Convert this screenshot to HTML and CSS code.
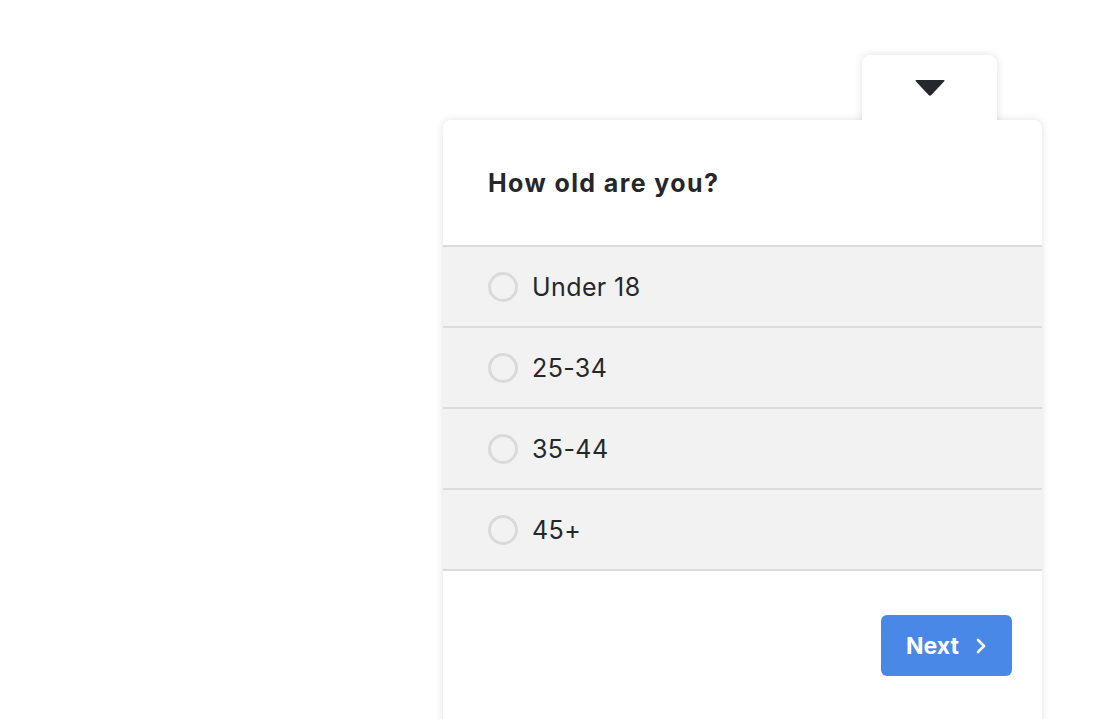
FILE: index.html
```html
<!DOCTYPE html>
<html lang="en">
<head>
    <meta charset="UTF-8">
    <meta name="viewport" content="width=device-width, initial-scale=1.0">
    <title>Survey</title>
    <link rel="stylesheet" href="styles.css">
</head>
<body>
    <div class="survey">
        <button class="toggle" aria-label="Collapse">
            <svg width="32" height="18" viewBox="0 0 32 18">
                <path d="M2.5 1 H29.5 Q31.5 1 30 2.6 L17.4 16 Q16 17.4 14.6 16 L2 2.6 Q0.5 1 2.5 1 Z" fill="#24272b"/>
            </svg>
        </button>
        <div class="card">
            <div class="question">How old are you?</div>
            <label class="option"><span class="radio"></span>Under 18</label>
            <label class="option"><span class="radio"></span>25-34</label>
            <label class="option"><span class="radio"></span>35-44</label>
            <label class="option"><span class="radio"></span>45+</label>
            <div class="footer">
                <button class="next">Next
                    <svg width="12" height="16" viewBox="0 0 12 16">
                        <path d="M3 2 L9 8 L3 14" fill="none" stroke="#fff" stroke-width="2.6" stroke-linecap="round" stroke-linejoin="round"/>
                    </svg>
                </button>
            </div>
        </div>
    </div>
</body>
</html>
```

FILE: styles.css
```css
body {
    margin: 0;
    font-family: Inter, "Liberation Sans", sans-serif;
    background-color: #fff;
    color: #25272b;
    overflow: hidden;
}
.survey {
    display: flex;
    flex-direction: column;
    width: 599px;
    padding-top: 55px;
    margin-left: 443px;
}
.toggle {
    position: relative;
    z-index: 1;
    align-self: flex-end;
    margin-right: 45px;
    margin-bottom: -8px;
    width: 135px;
    height: 73px;
    padding: 0 0 8px;
    display: flex;
    align-items: center;
    justify-content: center;
    background-color: #fff;
    border: none;
    border-radius: 8px 8px 0 0;
    box-shadow: 0 0 8px rgba(0, 0, 0, 0.12);
    clip-path: inset(-12px -12px 8px -12px);
    cursor: pointer;
}
.card {
    background-color: #fff;
    border-radius: 8px 8px 0 0;
    box-shadow: 0 0 8px rgba(0, 0, 0, 0.12);
}
.question {
    height: 125px;
    padding: 0 45px;
    display: flex;
    align-items: center;
    font-size: 25px;
    font-weight: 700;
    letter-spacing: 1.4px;
}
.option {
    height: 79px;
    padding: 0 45px;
    display: flex;
    align-items: center;
    gap: 14px;
    font-size: 25px;
    letter-spacing: 0.4px;
    background-color: #f2f2f2;
    border-top: 2px solid #dcdcdc;
    cursor: pointer;
}
.radio {
    width: 24px;
    height: 24px;
    border: 3px solid #dadada;
    border-radius: 50%;
    flex-shrink: 0;
}
.footer {
    display: flex;
    justify-content: flex-end;
    padding: 44px 30px 80px;
    border-top: 2px solid #dcdcdc;
}
.next {
    width: 131px;
    height: 61px;
    display: flex;
    align-items: center;
    justify-content: center;
    gap: 16px;
    font-family: inherit;
    font-size: 23px;
    font-weight: 700;
    color: #fff;
    background-color: #4a88e8;
    border: none;
    border-radius: 6px;
    cursor: pointer;
}
```
